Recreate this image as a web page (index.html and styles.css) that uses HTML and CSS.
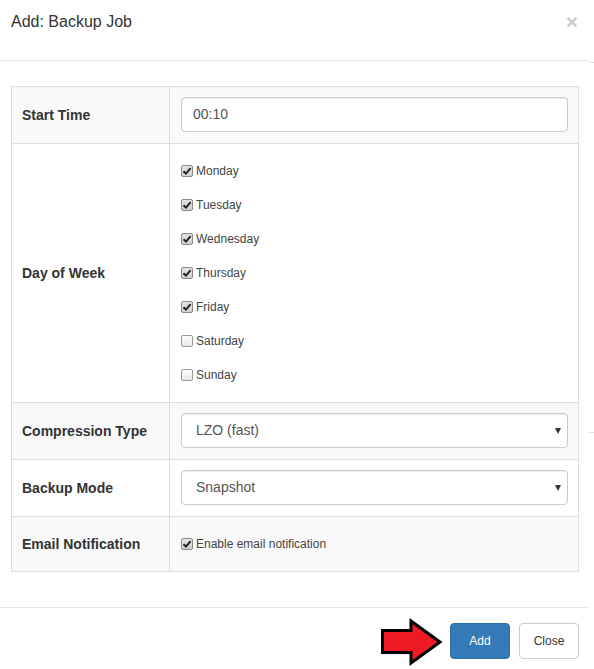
FILE: index.html
```html
<!DOCTYPE html>
<html>
<head>
<meta charset="utf-8">
<link rel="stylesheet" href="styles.css">
</head>
<body>
<div class="page">
  <div class="modal">
    <div class="modal-header">
      <div class="modal-title">Add: Backup Job</div>
      <div class="close">×</div>
    </div>
    <div class="modal-body">
      <table class="form-table">
        <tr class="striped">
          <td class="label-cell">Start Time</td>
          <td class="value-cell"><div class="cell-inner h56"><div class="text-input">00:10</div></div></td>
        </tr>
        <tr>
          <td class="label-cell">Day of Week</td>
          <td class="value-cell">
            <div class="cell-inner days">
              <div class="check-item"><span class="cb checked"><svg viewBox="0 0 10 10" width="10" height="10"><path d="M1.5 5.2 L4 7.6 L8.6 2.2" fill="none" stroke="#222" stroke-width="2"/></svg></span>Monday</div>
              <div class="check-item"><span class="cb checked"><svg viewBox="0 0 10 10" width="10" height="10"><path d="M1.5 5.2 L4 7.6 L8.6 2.2" fill="none" stroke="#222" stroke-width="2"/></svg></span>Tuesday</div>
              <div class="check-item"><span class="cb checked"><svg viewBox="0 0 10 10" width="10" height="10"><path d="M1.5 5.2 L4 7.6 L8.6 2.2" fill="none" stroke="#222" stroke-width="2"/></svg></span>Wednesday</div>
              <div class="check-item"><span class="cb checked"><svg viewBox="0 0 10 10" width="10" height="10"><path d="M1.5 5.2 L4 7.6 L8.6 2.2" fill="none" stroke="#222" stroke-width="2"/></svg></span>Thursday</div>
              <div class="check-item"><span class="cb checked"><svg viewBox="0 0 10 10" width="10" height="10"><path d="M1.5 5.2 L4 7.6 L8.6 2.2" fill="none" stroke="#222" stroke-width="2"/></svg></span>Friday</div>
              <div class="check-item"><span class="cb"></span>Saturday</div>
              <div class="check-item"><span class="cb"></span>Sunday</div>
            </div>
          </td>
        </tr>
        <tr class="striped">
          <td class="label-cell">Compression Type</td>
          <td class="value-cell"><div class="cell-inner h56"><div class="select-box">LZO (fast)<span class="caret"></span></div></div></td>
        </tr>
        <tr>
          <td class="label-cell">Backup Mode</td>
          <td class="value-cell"><div class="cell-inner h56"><div class="select-box">Snapshot<span class="caret"></span></div></div></td>
        </tr>
        <tr class="striped">
          <td class="label-cell">Email Notification</td>
          <td class="value-cell"><div class="cell-inner h54 centered"><div class="check-item"><span class="cb checked"><svg viewBox="0 0 10 10" width="10" height="10"><path d="M1.5 5.2 L4 7.6 L8.6 2.2" fill="none" stroke="#222" stroke-width="2"/></svg></span>Enable email notification</div></div></td>
        </tr>
      </table>
    </div>
    <div class="modal-footer">
      <div class="btn btn-primary">Add</div>
      <div class="btn btn-default">Close</div>
    </div>
    <svg class="arrow" width="68" height="53" viewBox="0 0 68 53">
      <polygon points="4.5,14.5 33,14.5 33,5 62,26 33,47 33,36.5 4.5,36.5" fill="#ed1c24" stroke="#000" stroke-width="3" stroke-linejoin="miter"/>
    </svg>
  </div>
  <div class="bg-mark mark-top"></div>
  <div class="bg-mark mark-mid"></div>
</div>
</body>
</html>
```
FILE: styles.css
```css
html, body {
  margin: 0;
  padding: 0;
  background: #fff;
}
body {
  font-family: "Liberation Sans", Arial, sans-serif;
  color: #333;
}
.page {
  position: relative;
  width: 594px;
  height: 669px;
  overflow: hidden;
}
.modal {
  position: relative;
  width: 589px;
  background: #fff;
}
.modal-header {
  box-sizing: border-box;
  height: 61px;
  border-bottom: 1px solid #e5e5e5;
  display: flex;
  justify-content: space-between;
  align-items: flex-start;
  padding: 0 11px;
}
.modal-title {
  font-size: 16px;
  line-height: 20px;
  padding-top: 12px;
  color: #333;
}
.close {
  font-size: 21px;
  font-weight: bold;
  line-height: 21px;
  margin-top: 11px;
  color: #000;
  opacity: 0.2;
}
.modal-body {
  padding: 25px 11px 35px 11px;
}
.form-table {
  border-collapse: collapse;
  width: 568px;
  table-layout: fixed;
}
.form-table td {
  border: 1px solid #ddd;
  padding: 0;
}
.striped td {
  background: #f9f9f9;
}
.label-cell {
  width: 147px;
  padding: 0 0 0 10px !important;
  font-size: 14px;
  font-weight: bold;
  color: #333;
  vertical-align: middle;
}
.value-cell {
  vertical-align: top;
}
.cell-inner {
  box-sizing: border-box;
  padding: 10px 10px 0 11px;
}
.h56 { height: 56px; }
.h54 { height: 54px; }
.centered {
  padding-top: 0;
  display: flex;
  align-items: center;
}
.days {
  height: 258px;
  padding-top: 10px;
  padding-bottom: 10px;
  display: flex;
  flex-direction: column;
}
.days .check-item {
  height: 34px;
}
.check-item {
  display: flex;
  align-items: center;
  font-size: 12px;
  color: #444;
}
.cb {
  box-sizing: border-box;
  width: 12px;
  height: 12px;
  border: 1px solid #9a9a9a;
  border-radius: 2px;
  background: linear-gradient(#fdfdfd, #e8e8e8);
  margin-right: 3px;
  display: flex;
  align-items: center;
  justify-content: center;
}
.cb.checked {
  background: linear-gradient(#e4e4e4, #cfcfcf);
  border-color: #8a8a8a;
}
.cb svg {
  display: block;
}
.text-input,
.select-box {
  box-sizing: border-box;
  position: relative;
  height: 35px;
  width: 387px;
  border: 1px solid #ccc;
  border-radius: 4px;
  background: #fff;
  box-shadow: inset 0 1px 1px rgba(0,0,0,0.075);
  font-size: 14px;
  color: #555;
  line-height: 33px;
  padding-left: 11px;
}
.select-box {
  padding-left: 14px;
}
.caret {
  position: absolute;
  right: 6px;
  top: 14px;
  width: 0;
  height: 0;
  border-left: 3.5px solid transparent;
  border-right: 3.5px solid transparent;
  border-top: 6px solid #333;
}
.modal-footer {
  border-top: 1px solid #e5e5e5;
  padding: 15px 10px 10px 0;
  display: flex;
  justify-content: flex-end;
  gap: 9px;
}
.btn {
  box-sizing: border-box;
  width: 60px;
  height: 36px;
  border-radius: 4px;
  border: 1px solid #ccc;
  font-size: 12px;
  display: flex;
  align-items: center;
  justify-content: center;
}
.btn-primary {
  background: #337ab7;
  border-color: #2e6da4;
  color: #fff;
}
.btn-default {
  background: #fff;
  color: #333;
}
.arrow {
  position: absolute;
  left: 378px;
  top: 616px;
}
.bg-mark {
  position: absolute;
  left: 589px;
  width: 5px;
  height: 1px;
  background: #ddd;
}
.mark-top { top: 62px; }
.mark-mid { top: 432px; }
```
